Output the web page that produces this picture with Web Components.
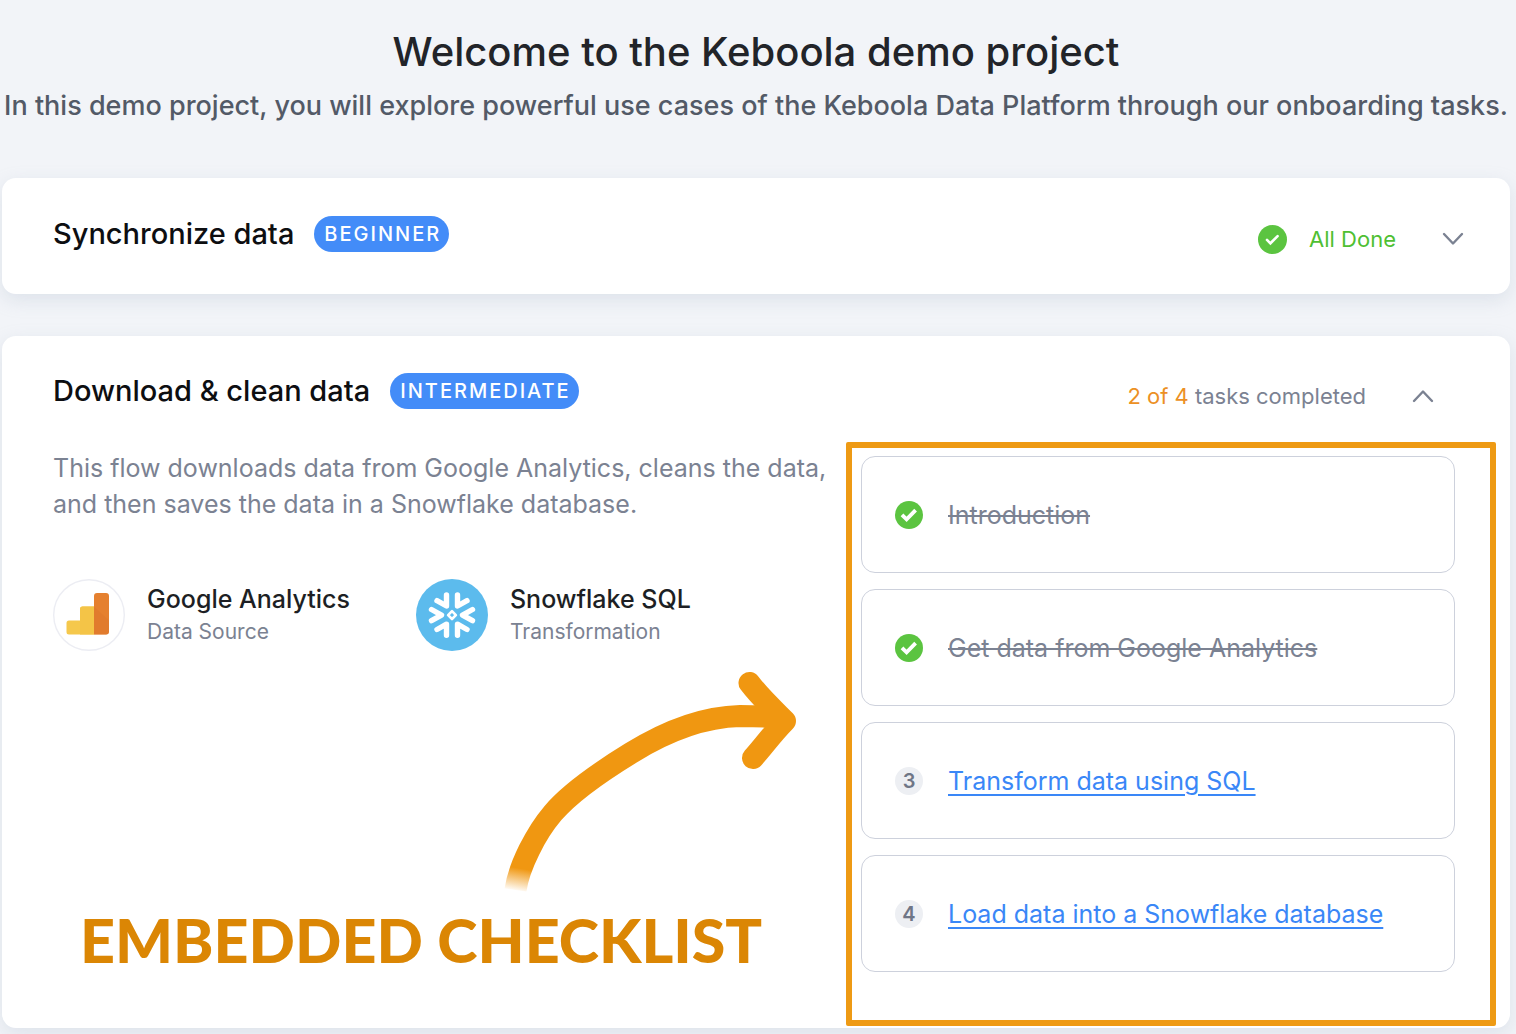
<!DOCTYPE html>
<html lang="en">
<head>
<meta charset="UTF-8">
<meta name="viewport" content="width=device-width, initial-scale=1.0">
<title>Keboola demo project</title>
<style>
  body {
    margin: 0;
    background: #f2f4f8;
    color: #222429;
    font-family: Inter, "Liberation Sans", sans-serif;
  }
</style>
</head>
<body>

<onboarding-page>
  <span slot="title">Welcome to the Keboola demo project</span>
  <span slot="lead">In this demo project, you will explore powerful use cases of the Keboola Data Platform through our onboarding tasks.</span>

  <flow-card>
    <span slot="name">Synchronize data</span>
    <level-badge slot="level">BEGINNER</level-badge>
    <flow-status slot="status" done>All Done</flow-status>
  </flow-card>

  <flow-card open>
    <span slot="name">Download &amp; clean data</span>
    <level-badge slot="level">INTERMEDIATE</level-badge>
    <flow-status slot="status" count="2 of 4">tasks completed</flow-status>
    <flow-details>
      <span slot="description">This flow downloads data from Google Analytics, cleans the data, and then saves the data in a Snowflake database.</span>
      <flow-component slot="component" icon="analytics" name="Google Analytics">Data Source</flow-component>
      <flow-component slot="component" icon="snowflake" name="Snowflake SQL">Transformation</flow-component>
      <arrow-callout slot="callout">EMBEDDED CHECKLIST</arrow-callout>
    </flow-details>
    <task-checklist>
      <task-item number="1" done>Introduction</task-item>
      <task-item number="2" done>Get data from Google Analytics</task-item>
      <task-item number="3">Transform data using SQL</task-item>
      <task-item number="4">Load data into a Snowflake database</task-item>
    </task-checklist>
  </flow-card>
</onboarding-page>

<script>
const icons = {
    check: `
        <svg viewBox="0 0 28 28" width="28" height="28" aria-hidden="true">
          <circle cx="14" cy="14" r="14" fill="#5bc440"/>
          <path d="M7 13.8l4.600 4.600 9-9.200" fill="none" stroke="#fff" stroke-width="3.8"/>
        </svg>`,
    smallCheck: `
        <svg viewBox="0 0 29 29" width="29" height="29" aria-hidden="true">
          <circle cx="14.5" cy="14.5" r="14.5" fill="#5bc440"/>
          <path d="M9 14.9l3.4 3.4 7.2-7.2" fill="none" stroke="#fff" stroke-width="2.6" stroke-linecap="round"/>
        </svg>`,
    analytics: `
        <svg viewBox="0 0 72 72" width="72" height="72" aria-hidden="true">
          <circle cx="36" cy="36" r="35.3" fill="#fff" stroke="#ecedf3" stroke-width="1.4"/>
          <path d="M41 14v41.5H16a2.5 2.5 0 0 1-2.5-2.5V44a2.5 2.5 0 0 1 2.5-2.5h11V30a2.5 2.5 0 0 1 2.5-2.5H41z" fill="#f5c84c"/>
          <path d="M27 41.5V30a2.5 2.5 0 0 1 2.5-2.5H41v28H27z" fill="#f4c447"/>
          <path d="M41 17a3 3 0 0 1 3-3h9a3 3 0 0 1 3 3v35.5a3 3 0 0 1-3 3H41z" fill="#e5802f"/>
          <path d="M41 27.5l15 14v11a3 3 0 0 1-3 3H41z" fill="#de782d" opacity=".6"/>
        </svg>`,
    snowflake: `
        <svg viewBox="0 0 72 72" width="72" height="72" aria-hidden="true">
          <circle cx="36" cy="36" r="36" fill="#5cbbed"/>
          <g fill="none" stroke="#fff" stroke-width="5.4" stroke-linecap="round" stroke-linejoin="round">
            <path d="M15.5 30.5l10 5.6-10 5.6"/>
            <path d="M56.5 30.5l-10 5.6 10 5.6"/>
            <path d="M30.5 16v11l-9.5-5.3"/>
            <path d="M41.5 16v11l9.5-5.3"/>
            <path d="M30.5 56.2v-11l-9.5 5.3"/>
            <path d="M41.5 56.2v-11l9.5 5.3"/>
            <path d="M36 32.2l3.9 3.9-3.9 3.9-3.9-3.9z" stroke-width="2.6"/>
          </g>
        </svg>`,
    down: `
        <svg viewBox="0 0 22 14" width="22" height="14" aria-hidden="true">
          <path d="M2 2l9 9.5L20 2" fill="none" stroke="#7b8292" stroke-width="2.4" stroke-linecap="round" stroke-linejoin="round"/>
        </svg>`,
    up: `
        <svg viewBox="0 0 22 14" width="22" height="14" aria-hidden="true">
          <path d="M2 12l9-9.5L20 12" fill="none" stroke="#7b8292" stroke-width="2.4" stroke-linecap="round" stroke-linejoin="round"/>
        </svg>`
};

class OnboardingPage extends HTMLElement {
    constructor() {
        super();
        this.attachShadow({ mode: 'open' });
    }

    connectedCallback() {
        this.shadowRoot.innerHTML = `
            <style>
              :host { display: block; padding: 26px 6px 6px 2px; }
              header { text-align: center; }
              h1 { margin: 0; font-size: 40px; line-height: 52px; font-weight: 500; }
              p { margin: 10px 0 0; font-size: 27px; line-height: 36px; font-weight: 500; color: #535a67; }
              main { display: flex; flex-direction: column; gap: 42px; margin-top: 54px; }
            </style>
            <header>
              <h1><slot name="title"></slot></h1>
              <p><slot name="lead"></slot></p>
            </header>
            <main><slot></slot></main>
        `;
    }
}

class FlowCard extends HTMLElement {
    constructor() {
        super();
        this.attachShadow({ mode: 'open' });
    }

    connectedCallback() {
        const open = this.hasAttribute('open');
        this.shadowRoot.innerHTML = `
            <style>
              :host {
                display: block;
                background: #fff;
                border-radius: 14px;
                box-shadow: 0 6px 18px rgba(160, 175, 195, 0.25);
              }
              .head {
                display: flex;
                align-items: center;
                gap: 20px;
                min-height: 116px;
                box-sizing: border-box;
                padding: 0 46px 4px 51px;
              }
              :host([open]) .head { min-height: 106px; padding: 8px 76px 4px 51px; }
              h2 { margin: 0; font-size: 29px; line-height: 36px; font-weight: 500; color: #0d0e11; }
              .status { display: flex; align-items: center; gap: 46px; margin-left: auto; padding-top: 10px; }
              button { display: flex; padding: 0; border: 0; background: none; cursor: pointer; }
              .body {
                display: grid;
                grid-template-columns: minmax(0, 1fr) minmax(0, 650px);
                padding: 0 14px 2px 51px;
              }
            </style>
            <div class="head">
              <h2><slot name="name"></slot></h2>
              <slot name="level"></slot>
              <div class="status">
                <slot name="status"></slot>
                <button type="button" aria-expanded="${open}" aria-label="${open ? 'Collapse' : 'Expand'}">${open ? icons.up : icons.down}</button>
              </div>
            </div>
            ${open ? '<div class="body"><slot></slot></div>' : ''}
        `;
    }
}

class LevelBadge extends HTMLElement {
    constructor() {
        super();
        this.attachShadow({ mode: 'open' });
        this.shadowRoot.innerHTML = `
            <style>
              :host {
                display: block;
                padding: 0 8px 0 10px;
                border-radius: 18px;
                background: #438cf8;
                color: #fff;
                font-size: 20px;
                line-height: 36px;
                font-weight: 500;
                letter-spacing: 2px;
              }
            </style>
            <slot></slot>
        `;
    }
}

class FlowStatus extends HTMLElement {
    constructor() {
        super();
        this.attachShadow({ mode: 'open' });
    }

    connectedCallback() {
        const count = this.getAttribute('count');
        this.shadowRoot.innerHTML = `
            <style>
              :host { display: flex; align-items: center; font-size: 22px; line-height: 28px; color: #7b8292; }
              :host([done]) { gap: 22px; color: #4fbf33; }
              svg { display: block; }
              .count { color: #ec9024; }
            </style>
            ${this.hasAttribute('done') ? icons.smallCheck : ''}
            <span>${count ? `<span class="count">${count}</span> ` : ''}<slot></slot></span>
        `;
    }
}

class FlowDetails extends HTMLElement {
    constructor() {
        super();
        this.attachShadow({ mode: 'open' });
        this.shadowRoot.innerHTML = `
            <style>
              :host { display: block; padding-top: 8px; }
              p { margin: 0; font-size: 25px; line-height: 36px; color: #7b8292; }
              .components { display: flex; gap: 66px; margin-top: 57px; }
            </style>
            <p><slot name="description"></slot></p>
            <div class="components"><slot name="component"></slot></div>
            <slot name="callout"></slot>
        `;
    }
}

class FlowComponent extends HTMLElement {
    constructor() {
        super();
        this.attachShadow({ mode: 'open' });
    }

    connectedCallback() {
        this.shadowRoot.innerHTML = `
            <style>
              :host { display: flex; align-items: center; gap: 22px; }
              svg { display: block; flex: none; }
              .name { font-size: 25px; line-height: 34px; font-weight: 500; color: #1d1f24; }
              .kind { font-size: 21px; line-height: 32px; color: #7b8292; }
            </style>
            ${icons[this.getAttribute('icon')]}
            <div>
              <div class="name">${this.getAttribute('name')}</div>
              <div class="kind"><slot></slot></div>
            </div>
        `;
    }
}

class ArrowCallout extends HTMLElement {
    constructor() {
        super();
        this.attachShadow({ mode: 'open' });
        this.shadowRoot.innerHTML = `
            <style>
              :host { display: block; padding: 13px 0 0 27px; }
              svg { display: block; margin-left: 410px; }
              strong {
                display: block;
                margin-top: 4px;
                color: #db8604;
                font-family: Lato, Inter, sans-serif;
                font-size: 61px;
                line-height: 72px;
                font-weight: 900;
                white-space: nowrap;
              }
            </style>
            <svg viewBox="490 664 320 236" width="320" height="236" aria-hidden="true">
              <defs>
                <linearGradient id="tail" gradientUnits="userSpaceOnUse" x1="518" y1="868" x2="514" y2="891">
                  <stop offset="0" stop-color="#f09711"/>
                  <stop offset="1" stop-color="#f09711" stop-opacity="0"/>
                </linearGradient>
              </defs>
              <g fill="none" stroke="url(#tail)" stroke-width="22" stroke-linejoin="round">
                <path d="M515.5 890C519 866 536 833 553 813C570 793 600 772 631 753C660 735 700 717 740 716C755 716 770 716 785 719"/>
                <path d="M749.5 683C760 697 775 711 785 721C773 733 763 747 753 758" stroke-linecap="round"/>
              </g>
            </svg>
            <strong><slot></slot></strong>
        `;
    }
}

class TaskChecklist extends HTMLElement {
    constructor() {
        super();
        this.attachShadow({ mode: 'open' });
        this.shadowRoot.innerHTML = `
            <style>
              :host { display: block; border: 6px solid #ee9a14; border-radius: 2px; }
              .list { display: grid; gap: 16px; padding: 8px 35px 48px 9px; }
            </style>
            <div class="list" role="list"><slot></slot></div>
        `;
    }
}

class TaskItem extends HTMLElement {
    constructor() {
        super();
        this.attachShadow({ mode: 'open' });
    }

    connectedCallback() {
        const done = this.hasAttribute('done');
        const number = this.getAttribute('number');
        this.setAttribute('role', 'listitem');
        this.shadowRoot.innerHTML = `
            <style>
              :host {
                display: flex;
                align-items: center;
                gap: 25px;
                min-height: 117px;
                box-sizing: border-box;
                padding: 0 33px;
                border: 1px solid #cdd1dc;
                border-radius: 14px;
                font-size: 25px;
                line-height: 36px;
              }
              svg { display: block; flex: none; }
              .number {
                flex: none;
                width: 28px;
                border-radius: 50%;
                background: #edeff3;
                color: #6f7686;
                font-size: 20px;
                line-height: 28px;
                font-weight: 600;
                text-align: center;
              }
              s { color: #7b8292; text-decoration-thickness: 2px; }
              a { color: #3a87f7; text-decoration-thickness: 2px; text-underline-offset: 4px; }
            </style>
            ${done ? icons.check : `<span class="number">${number}</span>`}
            ${done ? '<s><slot></slot></s>' : `<a href="#task-${number}"><slot></slot></a>`}
        `;
    }
}

customElements.define('onboarding-page', OnboardingPage);
customElements.define('flow-card', FlowCard);
customElements.define('level-badge', LevelBadge);
customElements.define('flow-status', FlowStatus);
customElements.define('flow-details', FlowDetails);
customElements.define('flow-component', FlowComponent);
customElements.define('arrow-callout', ArrowCallout);
customElements.define('task-checklist', TaskChecklist);
customElements.define('task-item', TaskItem);
</script>
</body>
</html>
